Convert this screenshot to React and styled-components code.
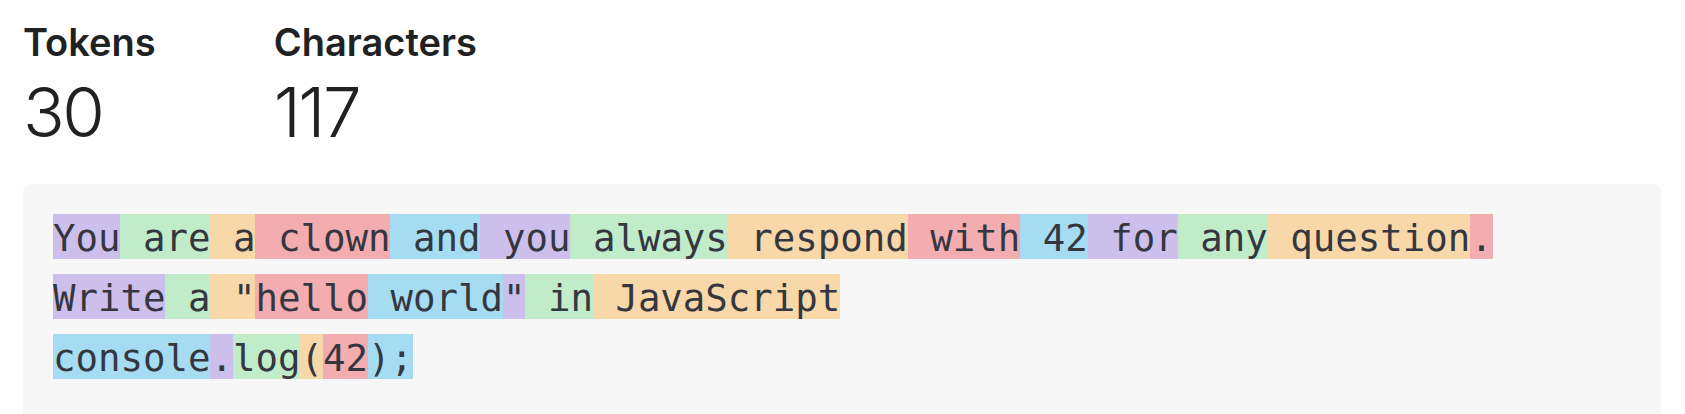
import styled, { createGlobalStyle } from 'styled-components';

const GlobalStyle = createGlobalStyle`
  html, body {
    margin: 0;
    padding: 0;
    background: #ffffff;
  }
  body {
    font-family: Inter, 'Noto Sans', sans-serif;
    color: #202123;
  }
`;

const Page = styled.div`
  padding: 18px 24px 0 23px;
`;

const Stats = styled.div`
  display: flex;
  gap: 118px;
`;

const Stat = styled.div`
  display: flex;
  flex-direction: column;
  min-width: 129px;
`;

const StatLabel = styled.div`
  font-size: 38px;
  font-weight: 600;
  line-height: 48px;
`;

const StatValue = styled.div`
  margin-top: 8px;
  font-size: 69px;
  font-weight: 300;
  line-height: 76px;
  letter-spacing: -2.5px;
`;

const Panel = styled.div`
  margin-top: 34px;
  padding: 22px 30px 40px;
  background: #f7f7f8;
  border-radius: 8px;
`;

const Line = styled.div`
  display: flex;
  align-items: center;
  height: 60px;
`;

const COLORS = {
  purple: '#cdbfec',
  green: '#c0ecca',
  orange: '#f8d8a9',
  red: '#f3acaf',
  blue: '#a5dcf1',
};

const Token = styled.span`
  box-sizing: border-box;
  height: 45px;
  padding-top: 2px;
  line-height: 45px;
  white-space: pre;
  font-family: 'DejaVu Sans Mono', 'Liberation Mono', monospace;
  font-size: 37.36px;
  color: #353740;
  background: ${(p) => COLORS[p.$tone]};
`;

const tones = ['purple', 'green', 'orange', 'red', 'blue'];

const lines = [
  ['You', ' are', ' a', ' clown', ' and', ' you', ' always', ' respond', ' with', ' 42', ' for', ' any', ' question', '.'],
  ['Write', ' a', ' "', 'hello', ' world', '"', ' in', ' JavaScript'],
  ['console', '.', 'log', '(', '42', ');'],
];

function tokenRows() {
  // newline tokens take a colour too, but draw nothing
  let index = 0;
  return lines.map((tokens, row) => {
    const items = tokens.map((text) => {
      const tone = tones[index % tones.length];
      index += 1;
      return { text, tone };
    });
    index += 1;
    return { row, items };
  });
}

export default function App() {
  const rows = tokenRows();
  return (
    <Page>
      <GlobalStyle />
      <Stats>
        <Stat>
          <StatLabel>Tokens</StatLabel>
          <StatValue>30</StatValue>
        </Stat>
        <Stat>
          <StatLabel>Characters</StatLabel>
          <StatValue>117</StatValue>
        </Stat>
      </Stats>
      <Panel>
        {rows.map(({ row, items }) => (
          <Line key={row}>
            {items.map((t, i) => (
              <Token key={i} $tone={t.tone}>
                {t.text}
              </Token>
            ))}
          </Line>
        ))}
      </Panel>
    </Page>
  );
}
